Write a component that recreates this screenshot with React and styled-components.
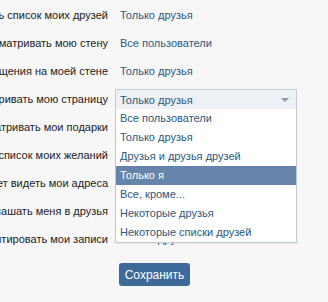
import React from 'react'
import styled, { createGlobalStyle } from 'styled-components'

const Global = createGlobalStyle`
  html, body {
    margin: 0;
    padding: 0;
    background: #f7f7f7;
    font-family: "Liberation Sans", Arial, sans-serif;
    font-size: 11px;
  }
`

const Page = styled.div`
  width: 328px;
  height: 302px;
  overflow: hidden;
  padding-top: 1px;
  box-sizing: border-box;
`

const Row = styled.div`
  display: grid;
  grid-template-columns: 108px 182px;
  column-gap: 7px;
  height: 28px;
  align-items: center;
`

const Label = styled.div`
  display: flex;
  justify-content: flex-end;
  white-space: nowrap;
  color: #222;
`

const Value = styled.div`
  position: relative;
  padding-left: 5px;
  color: #2b587a;
  white-space: nowrap;
`

const SelectWrap = styled.div`
  position: relative;
  height: 20px;
`

const SelectHead = styled.div`
  box-sizing: border-box;
  height: 20px;
  border: 1px solid #c0cad5;
  border-bottom: none;
  background: #edf0f4;
  color: #2b587a;
  display: flex;
  align-items: center;
  justify-content: space-between;
  padding: 0 5px 0 4px;
`

const Arrow = styled.span`
  width: 0;
  height: 0;
  border-left: 4px solid transparent;
  border-right: 4px solid transparent;
  border-top: 4px solid #8a9bb0;
  margin-right: 2px;
`

const List = styled.ul`
  position: absolute;
  left: 0;
  right: 0;
  top: 20px;
  margin: 0;
  padding: 0;
  list-style: none;
  background: #fff;
  border: 1px solid #c0cad5;
  border-top: none;
  box-shadow: 0 1px 2px rgba(0, 0, 0, 0.06);
  z-index: 2;
`

const Item = styled.li`
  height: 19px;
  line-height: 19px;
  padding-left: 4px;
  color: ${p => (p.$active ? '#fff' : '#2b587a')};
  background: ${p => (p.$active ? '#6584a9' : 'transparent')};
`

const Actions = styled.div`
  padding: 10px 0 0 119px;
`

const Button = styled.button`
  height: 23px;
  width: 71px;
  border: none;
  border-radius: 3px;
  background: #3d6a98;
  color: #fff;
  font-family: inherit;
  font-size: 12px;
  padding: 0;
`

const options = [
  'Все пользователи',
  'Только друзья',
  'Друзья и друзья друзей',
  'Только я',
  'Все, кроме...',
  'Некоторые друзья',
  'Некоторые списки друзей',
]

// rows 5-8 sit under the open list, so their values are left out
const rows = [
  ['Кто может видеть список моих друзей', 'Только друзья'],
  ['Кто может просматривать мою стену', 'Все пользователи'],
  ['Кто может оставлять сообщения на моей стене', 'Только друзья'],
  ['Кто может просматривать мою страницу', 'select'],
  ['Кто может просматривать мои подарки', ''],
  ['Кто может видеть список моих желаний', ''],
  ['Кто может видеть мои адреса', ''],
  ['Кто может приглашать меня в друзья', ''],
  ['Кто может комментировать мои записи', 'Только друзья'],
]

const App = () => {
  return (
    <Page>
      <Global />
      {rows.map(([label, value], i) => (
        <Row key={i}>
          <Label>{label}</Label>
          {value === 'select' ? (
            <SelectWrap>
              <SelectHead>
                Только друзья
                <Arrow />
              </SelectHead>
              <List>
                {options.map(o => (
                  <Item key={o} $active={o === 'Только я'}>{o}</Item>
                ))}
              </List>
            </SelectWrap>
          ) : (
            <Value>{value}</Value>
          )}
        </Row>
      ))}
      <Actions>
        <Button>Сохранить</Button>
      </Actions>
    </Page>
  )
}

export default App
